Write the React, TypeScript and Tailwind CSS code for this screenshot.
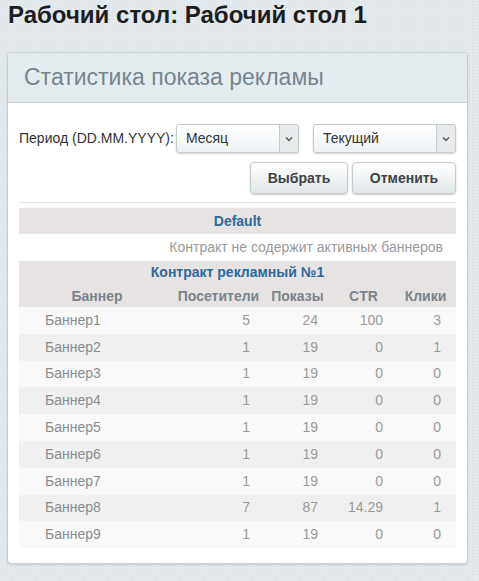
import React from 'react';

const rows = [
  { name: 'Баннер1', visitors: '5', shows: '24', ctr: '100', clicks: '3' },
  { name: 'Баннер2', visitors: '1', shows: '19', ctr: '0', clicks: '1' },
  { name: 'Баннер3', visitors: '1', shows: '19', ctr: '0', clicks: '0' },
  { name: 'Баннер4', visitors: '1', shows: '19', ctr: '0', clicks: '0' },
  { name: 'Баннер5', visitors: '1', shows: '19', ctr: '0', clicks: '0' },
  { name: 'Баннер6', visitors: '1', shows: '19', ctr: '0', clicks: '0' },
  { name: 'Баннер7', visitors: '1', shows: '19', ctr: '0', clicks: '0' },
  { name: 'Баннер8', visitors: '7', shows: '87', ctr: '14.29', clicks: '1' },
  { name: 'Баннер9', visitors: '1', shows: '19', ctr: '0', clicks: '0' },
];

function Select({ value, width }: { value: string; width: string }) {
  return (
    <div className={`${width} h-[29px] flex items-stretch rounded-[3px] border border-[#c3cbd0] bg-gradient-to-b from-white to-[#eef2f4] shadow-[0_1px_2px_rgba(0,0,0,0.18)]`}>
      <div className="flex-1 pl-[9px] flex items-center text-[14px] text-[#333]">{value}</div>
      <div className="w-[19px] flex items-center justify-center border-l border-[#c3cbd0] bg-[#e8ebec] rounded-r-[3px]">
        <svg width="8" height="6" viewBox="0 0 8 6">
          <path d="M1 1.5 L4 4.5 L7 1.5" fill="none" stroke="#555" strokeWidth="1.4" />
        </svg>
      </div>
    </div>
  );
}

function Button({ label, width }: { label: string; width: string }) {
  return (
    <button className={`${width} h-[32px] rounded-[4px] border border-[#c4ccd0] bg-gradient-to-b from-white to-[#e1e7ea] shadow-[0_1px_2px_rgba(0,0,0,0.2)] text-[14px] font-bold text-[#3f4345]`}>
      {label}
    </button>
  );
}

export default function App() {
  return (
    <div className="min-h-[581px] w-[479px] bg-[#e3e9ec] bg-[radial-gradient(#d9e1e5_1px,transparent_1px)] bg-[length:3px_3px] font-[family-name:Liberation_Sans,Arial,sans-serif] pt-[1px] px-[7px] pb-[18px]">
      <h1 className="pl-[1px] text-[24px] leading-[28px] font-bold text-[#1d1d1d]">Рабочий стол: Рабочий стол 1</h1>

      <div className="mt-[23px] w-[461px] rounded-[4px] border border-[#c6cfd3] bg-white shadow-[0_1px_2px_rgba(0,0,0,0.12)]">
        <div className="h-[50px] flex items-center pl-[16px] bg-[#e5ecef] border-b border-[#c6cfd3] rounded-t-[4px] text-[23px] text-[#76858f]">
          Статистика показа рекламы
        </div>

        <div className="px-[11px] pt-[21px] pb-[15px]">
          <div className="flex items-center">
            <span className="text-[14px] text-[#333] mr-[2px] whitespace-nowrap">Период (DD.MM.YYYY):</span>
            <Select value="Месяц" width="w-[123px]" />
            <div className="ml-[14px]">
              <Select value="Текущий" width="w-[143px]" />
            </div>
          </div>

          <div className="flex justify-end gap-[4px] mt-[9px]">
            <Button label="Выбрать" width="w-[98px]" />
            <Button label="Отменить" width="w-[104px]" />
          </div>

          <div className="mt-[8px] h-px bg-[#dfe5e8]" />

          <div className="mt-[5px] text-[14px]">
            <div className="h-[26px] bg-[#e7e3e3] flex items-center justify-center font-bold text-[#2b6a9d]">Default</div>
            <div className="h-[27px] flex items-center justify-end pr-[13px] text-[#9a9a9a]">Контракт не содержит активных баннеров</div>
            <div className="bg-[#e7e3e3]">
              <div className="h-[22px] flex items-end justify-center font-bold text-[#2b6a9d]">Контракт рекламный №1</div>
              <div className="h-[24px] flex items-center pt-[2px] font-bold text-[#7b858c]">
                <div className="w-[156px] text-center">Баннер</div>
                <div className="w-[87px] text-center">Посетители</div>
                <div className="w-[65px] text-center pl-[6px]">Показы</div>
                <div className="w-[65px] text-center pl-[8px]">CTR</div>
                <div className="w-[63px] text-center pl-[4px]">Клики</div>
              </div>
            </div>
            {rows.map((r, i) => (
              <div key={r.name} className={`h-[26.8px] flex items-center text-[#999] ${i % 2 === 0 ? 'bg-[#f9f9f9]' : 'bg-[#f0f0f0]'}`}>
                <div className="w-[156px] pl-[26px] text-[#8c8c8c]">{r.name}</div>
                <div className="w-[87px] text-right pr-[12px]">{r.visitors}</div>
                <div className="w-[65px] text-right pr-[9px]">{r.shows}</div>
                <div className="w-[65px] text-right pr-[9px]">{r.ctr}</div>
                <div className="w-[63px] text-right pr-[14px]">{r.clicks}</div>
              </div>
            ))}
          </div>
        </div>
      </div>
    </div>
  );
}
